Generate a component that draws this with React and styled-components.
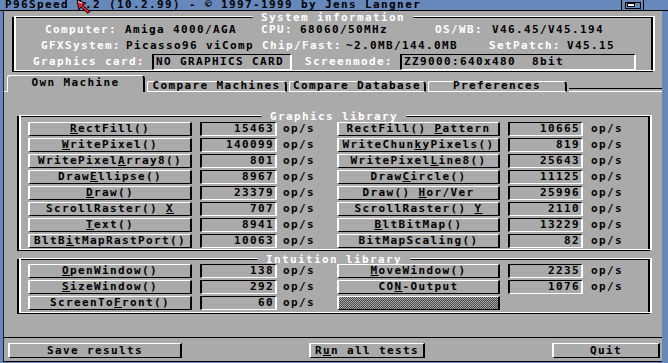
import React from 'react';
import styled, { createGlobalStyle } from 'styled-components';

const BLUE = '#6688bb';
const GRAY = '#aaaaaa';

const Global = createGlobalStyle`
  html, body { margin: 0; padding: 0; background: ${BLUE}; }
  body { width: 668px; height: 363px; overflow: hidden; }
  *, *::before, *::after { box-sizing: border-box; }
`;

const Screen = styled.div`
  width: 668px;
  height: 363px;
  background: ${BLUE};
  display: flex;
  flex-direction: column;
  font-family: "DejaVu Sans Mono", "Liberation Mono", monospace;
  font-weight: bold;
  font-size: 11px;
  letter-spacing: 1.38px;
  line-height: 10px;
  color: #000;
  white-space: pre;
`;

const TitleBar = styled.div`
  position: relative;
  flex: none;
  height: 11px;
  display: flex;
  align-items: flex-start;
  padding-left: 5px;
  border-bottom: 1px solid #000;
`;

const TitleText = styled.span`
  flex: 1;
  line-height: 10px;
`;

const DepthGadget = styled.div`
  flex: none;
  width: 23px;
  height: 10px;
  margin-right: 24px;
  border-left: 1px solid #000;
  border-right: 1px solid #000;
  display: flex;
  align-items: center;
  justify-content: center;
`;

const Pointer = styled.svg`
  position: absolute;
  left: 76px;
  top: 0;
`;

const Body = styled.div`
  flex: 1;
  margin: 0 6px 1px 3px;
  background: ${GRAY};
  border-left: 1px solid #1a2233;
  border-bottom: 1px solid #000;
  display: flex;
  flex-direction: column;
`;

const Group = styled.div`
  position: relative;
  flex: none;
  width: ${(p) => p.$w}px;
  margin: ${(p) => p.$m};
  border-style: solid;
  border-color: #000;
  border-width: 1px 2px;
  padding: ${(p) => p.$pad};
  display: flex;
  flex-direction: column;
  gap: ${(p) => p.$gap || 0}px;
  &::before {
    content: '';
    position: absolute;
    left: 0;
    top: -2px;
    right: -4px;
    bottom: 0;
    border-style: solid;
    border-color: #fff;
    border-width: 1px 2px;
    pointer-events: none;
  }
`;

const GroupTitle = styled.div`
  position: absolute;
  top: -5px;
  left: 50%;
  transform: translateX(-50%);
  padding: 0 8px 0 9px;
  background: ${GRAY};
  color: #fff;
  line-height: 9px;
`;

const InfoRow = styled.div`
  display: flex;
  align-items: center;
  height: 16px;
  padding-left: ${(p) => p.$indent}px;
`;

const Cell = styled.span`
  flex: none;
  width: ${(p) => p.$w}px;
  margin-left: ${(p) => p.$ml || 0}px;
  color: ${(p) => (p.$light ? '#fff' : '#000')};
`;

const InfoBox = styled.div`
  flex: none;
  width: ${(p) => p.$w}px;
  height: 16px;
  display: flex;
  align-items: center;
  padding-left: 2px;
  border-style: solid;
  border-width: 1px 2px;
  border-color: #000 #fff #fff #000;
`;

const TabBar = styled.div`
  flex: none;
  height: 17px;
  margin-top: 3px;
  display: flex;
  align-items: flex-end;
`;

const TabLead = styled.div`
  flex: none;
  width: 3px;
  height: 1px;
  background: #fff;
`;

const Tab = styled.div`
  flex: none;
  width: ${(p) => p.$w}px;
  margin-right: 2px;
  height: ${(p) => (p.$active ? 17 : 11)}px;
  border-top: 1px solid #fff;
  border-left: 1px solid #fff;
  border-right: 2px solid #000;
  border-bottom: ${(p) => (p.$active ? 'none' : '1px solid #fff')};
  border-radius: ${(p) => (p.$active ? '3px 4px 0 0' : '2px 4px 0 0')};
  display: flex;
  justify-content: center;
  padding-top: ${(p) => (p.$active ? 2 : 0)}px;
  line-height: ${(p) => (p.$active ? 10 : 8)}px;
`;

const TabFill = styled.div`
  flex: 1;
  height: 4px;
  border-top: 1px solid #000;
  border-bottom: 1px solid #fff;
`;

const Row = styled.div`
  display: flex;
  align-items: center;
  height: 14px;
`;

const Button = styled.div`
  flex: none;
  width: ${(p) => p.$w}px;
  height: ${(p) => p.$h || 14}px;
  display: flex;
  align-items: center;
  justify-content: center;
  border-style: solid;
  border-width: 1px 2px;
  border-color: #fff #000 #000 #fff;
  background: ${(p) =>
    p.$dither
      ? `repeating-conic-gradient(#444 0 25%, ${GRAY} 0 50%) 0 0 / 2px 2px`
      : GRAY};
`;

const ValueBox = styled.div`
  flex: none;
  width: ${(p) => p.$w}px;
  height: 14px;
  margin-left: 8px;
  display: flex;
  align-items: center;
  justify-content: flex-end;
  padding-right: 1px;
  border-style: solid;
  border-width: 1px 2px;
  border-color: #000 #fff #fff #000;
`;

const Unit = styled.span`
  flex: none;
  width: ${(p) => p.$w}px;
  margin-left: ${(p) => p.$ml}px;
`;

const Spacer = styled.div`
  flex: 1;
`;

const BottomBar = styled.div`
  flex: none;
  border-top: 1px solid #000;
  padding: 5px 2px 3px 4px;
  display: flex;
  justify-content: space-between;
`;

const Key = styled.u`
  text-decoration: underline;
  text-underline-offset: 1px;
  text-decoration-thickness: 1px;
`;

function Label({ text }) {
  const i = text.indexOf('_');
  if (i < 0) return <>{text}</>;
  return (
    <>
      {text.slice(0, i)}
      <Key>{text[i + 1]}</Key>
      {text.slice(i + 2)}
    </>
  );
}

const gfx = [
  ['_RectFill()', 15463, 'RectFill() _Pattern', 10665],
  ['_WritePixel()', 140099, 'WriteChun_kyPixels()', 819],
  ['WritePixel_Array8()', 801, 'WritePixel_Line8()', 25643],
  ['Draw_Ellipse()', 8967, 'Draw_Circle()', 11125],
  ['_Draw()', 23379, 'Draw() _Hor/Ver', 25996],
  ['ScrollRaster() _X', 707, 'ScrollRaster() _Y', 2110],
  ['_Text()', 8941, '_BltBitMap()', 13229],
  ['BltB_itMapRastPort()', 10063, 'BitMapScaling()', 82],
];

const intui = [
  ['_OpenWindow()', 138, '_MoveWindow()', 2235],
  ['_SizeWindow()', 292, 'CO_N-Output', 1076],
  ['ScreenTo_Front()', 60, null, null],
];

function BenchRow({ a, av, b, bv }) {
  return (
    <Row>
      <Button $w={164}><Label text={a} /></Button>
      <ValueBox $w={77}>{av}</ValueBox>
      <Unit $ml={6} $w={54}>op/s</Unit>
      {b ? (
        <>
          <Button $w={163}><Label text={b} /></Button>
          <ValueBox $w={75}>{bv}</ValueBox>
          <Unit $ml={8} $w={40}>op/s</Unit>
        </>
      ) : (
        <Button $w={163} $dither />
      )}
    </Row>
  );
}

export default function App() {
  return (
    <Screen>
      <Global />
      <TitleBar>
        <TitleText>P96Speed 1.2 (10.2.99) - © 1997-1999 by Jens Langner</TitleText>
        <DepthGadget>
          <svg width="16" height="7" viewBox="0 0 16 7">
            <rect x="0.5" y="0.5" width="15" height="6" fill={BLUE} stroke="#000" />
            <rect x="2.5" y="1.5" width="7" height="3" fill="#fff" stroke="#000" />
          </svg>
        </DepthGadget>
        <Pointer width="16" height="14" viewBox="0 0 16 14">
          <path d="M1 0.5 L10 3 L6.5 5 L14 11.5 L12 13.5 L5 7 L3 10 Z" fill="#e0202a" stroke="#000" strokeWidth="0.9" />
          <path d="M2 1.5 L6 3" stroke="#fff" strokeWidth="1" />
        </Pointer>
      </TitleBar>
      <Body>
        <Group $w={641} $m="6px 0 0 8px" $pad="4px 0 1px 0">
          <GroupTitle>System information</GroupTitle>
          <InfoRow $indent={31}>
            <Cell $light $w={80}>Computer:</Cell>
            <Cell $w={136}>Amiga 4000/AGA</Cell>
            <Cell $light $w={39}>CPU:</Cell>
            <Cell $w={135}>68060/50MHz</Cell>
            <Cell $light $w={57}>OS/WB:</Cell>
            <Cell $w={120}>V46.45/V45.194</Cell>
          </InfoRow>
          <InfoRow $indent={27}>
            <Cell $light $w={85}>GFXSystem:</Cell>
            <Cell $w={136}>Picasso96 viComp</Cell>
            <Cell $light $w={84}>Chip/Fast:</Cell>
            <Cell $w={143}>~2.0MB/144.0MB</Cell>
            <Cell $light $w={78}>SetPatch:</Cell>
            <Cell $w={60}>V45.15</Cell>
          </InfoRow>
          <InfoRow $indent={19}>
            <Cell $light $w={119}>Graphics card:</Cell>
            <InfoBox $w={140}>NO GRAPHICS CARD</InfoBox>
            <Cell $light $ml={13} $w={95}>Screenmode:</Cell>
            <InfoBox $w={236}>ZZ9000:640x480  8bit</InfoBox>
          </InfoRow>
        </Group>

        <TabBar>
          <TabLead />
          <Tab $active $w={138}>Own Machine</Tab>
          <Tab $w={140}>Compare Machines</Tab>
          <Tab $w={137}>Compare Database</Tab>
          <Tab $w={139}>Preferences</Tab>
          <TabFill />
        </TabBar>

        <Group $w={633} $m="24px 0 0 13px" $pad="5px 0 2px 9px" $gap={2}>
          <GroupTitle>Graphics library</GroupTitle>
          {gfx.map(([a, av, b, bv]) => (
            <BenchRow key={a} a={a} av={av} b={b} bv={bv} />
          ))}
        </Group>

        <Group $w={633} $m="8px 0 0 13px" $pad="4px 0 3px 9px" $gap={2}>
          <GroupTitle>Intuition library</GroupTitle>
          {intui.map(([a, av, b, bv]) => (
            <BenchRow key={a} a={a} av={av} b={b} bv={bv} />
          ))}
        </Group>

        <Spacer />

        <BottomBar>
          <Button $w={174} $h={15}>Save results</Button>
          <Button $w={116} $h={15}><Label text="R_un all tests" /></Button>
          <Button $w={108} $h={15}>Quit</Button>
        </BottomBar>
      </Body>
    </Screen>
  );
}
